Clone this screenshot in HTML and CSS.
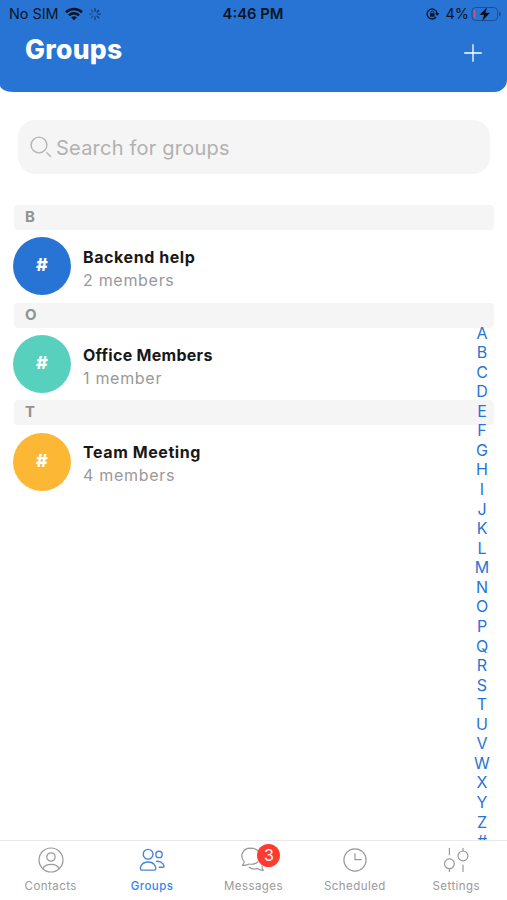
FILE: index.html
```html
<!DOCTYPE html>
<html lang="en">
<head>
    <meta charset="UTF-8">
    <meta name="viewport" content="width=device-width, initial-scale=1.0">
    <title>Groups</title>
    <link rel="stylesheet" href="styles.css">
</head>
<body>
    <div class="app">
        <header class="header">
            <div class="status-bar">
                <div class="status-left">
                    <span class="carrier">No SIM</span>
                    <svg class="wifi" width="18" height="14" viewBox="0 0 18 14" fill="none" stroke="#071426" stroke-width="2.6">
                        <path d="M1 5.2C5.5 0.9 12.5 0.9 17 5.2"/>
                        <path d="M4 8.4C6.9 5.7 11.1 5.7 14 8.4"/>
                        <path d="M9 13.2L6.2 10.4C7.8 9 10.2 9 11.8 10.4Z" fill="#071426" stroke="none"/>
                    </svg>
                    <svg class="spinner" width="12" height="12" viewBox="0 0 12 12" fill="none" stroke="#0b2750" stroke-width="1.1" stroke-linecap="round">
                        <path d="M6 .6v2.6M9.8 2.2L8 4"/>
                        <path d="M11.4 6H8.8M9.8 9.8L8 8M6 11.4V8.8" opacity=".85"/>
                        <path d="M2.2 9.8L4 8M.6 6h2.6M2.2 2.2L4 4" opacity=".5"/>
                    </svg>
                </div>
                <span class="clock">4:46 PM</span>
                <div class="status-right">
                    <svg width="14" height="12" viewBox="0 0 14 12" fill="none" stroke="#071426" stroke-width="1.3">
                        <path d="M10.1 9A5 5 0 1 1 11 5"/>
                        <path d="M9 5h4.4L11.2 8Z" fill="#071426" stroke="none"/>
                        <rect x="4" y="5.3" width="4.6" height="3.4" rx=".5" fill="#071426" stroke="none"/>
                        <path d="M4.9 5.4V4.3a1.4 1.4 0 0 1 2.8 0v1.1" stroke-width=".9"/>
                    </svg>
                    <span class="percent">4%</span>
                    <svg class="battery" width="31" height="16" viewBox="0 0 31 16">
                        <rect x="1" y="1.5" width="25.5" height="13" rx="3.6" fill="none" stroke="#1c4f91"/>
                        <path d="M28 5.5c2.6.8 2.6 4.2 0 5Z" fill="#1c4f91"/>
                        <rect x="2.7" y="4" width="1.6" height="8" rx=".8" fill="#c75b78"/>
                        <path d="M16.2 1L8.4 8.9h4.5L11 15.4l8-8.6h-4.5Z" fill="#050b14" stroke="#2874d4" stroke-width=".3"/>
                    </svg>
                </div>
            </div>
            <div class="title-bar">
                <h1 class="title">Groups</h1>
                <svg class="add" width="18" height="18" viewBox="0 0 18 18" stroke="#fff" stroke-width="1.3" stroke-linecap="round">
                    <path d="M9 .7v16.6M.7 9h16.6"/>
                </svg>
            </div>
        </header>

        <main class="content">
            <div class="search">
                <svg class="search-icon" width="22" height="22" viewBox="0 0 22 22">
                    <circle cx="9" cy="9" r="7.9"/>
                    <path d="M16.8 16.8l3.8 3.6"/>
                </svg>
                <span class="placeholder">Search for groups</span>
            </div>

            <div class="group-list">
                <div class="section-header">B</div>
                <div class="row">
                    <div class="avatar blue">#</div>
                    <div class="info">
                        <div class="name">Backend help</div>
                        <div class="members">2 members</div>
                    </div>
                </div>
                <div class="section-header">O</div>
                <div class="row">
                    <div class="avatar teal">#</div>
                    <div class="info">
                        <div class="name name-tight">Office Members</div>
                        <div class="members">1 member</div>
                    </div>
                </div>
                <div class="section-header">T</div>
                <div class="row">
                    <div class="avatar orange">#</div>
                    <div class="info">
                        <div class="name">Team Meeting</div>
                        <div class="members">4 members</div>
                    </div>
                </div>
            </div>

            <div class="alphabet">
                <span>A</span><span>B</span><span>C</span><span>D</span><span>E</span><span>F</span><span>G</span>
                <span>H</span><span>I</span><span>J</span><span>K</span><span>L</span><span>M</span><span>N</span>
                <span>O</span><span>P</span><span>Q</span><span>R</span><span>S</span><span>T</span><span>U</span>
                <span>V</span><span>W</span><span>X</span><span>Y</span><span>Z</span><span>#</span>
            </div>
        </main>

        <nav class="tabs">
            <div class="tab">
                <svg width="28" height="26" viewBox="0 0 28 26">
                    <circle cx="14" cy="13" r="12"/>
                    <circle cx="14" cy="10" r="4.2"/>
                    <path d="M6 21.6C8.2 16 19.8 16 22 21.6"/>
                </svg>
                <span>Contacts</span>
            </div>
            <div class="tab active">
                <svg width="28" height="26" viewBox="0 0 28 26">
                    <circle cx="10.1" cy="7.3" r="4.9"/>
                    <circle cx="21" cy="7.4" r="3.2"/>
                    <path d="M3.8 23.1C.8 23.1 2.5 15 10.1 15s9.3 8.1 6.3 8.1Z"/>
                    <path d="M18.7 14.3c5.5-.6 8.9 5.5 6.5 6h-4"/>
                </svg>
                <span>Groups</span>
            </div>
            <div class="tab">
                <div class="tab-icon">
                    <svg width="28" height="26" viewBox="0 0 28 26">
                        <path d="M19 14.8c-2.2 2-5.4 2.9-9 2.2-2 1.1-4 1.7-6.5 1.4 1.2-1.4 1.7-2.5 1.6-4.1C.2 8.7 3.8 1.3 11.5 1.1c3 0 5.4.8 7.2 2.4"/>
                        <path d="M10.2 20.2c2.2 1.8 5.2 2.2 8.2 1.4 1.8 1.2 3.6 1.8 5.8 1.8-.9-1.6-1.2-2.7-1.1-4.3"/>
                    </svg>
                    <span class="badge">3</span>
                </div>
                <span>Messages</span>
            </div>
            <div class="tab">
                <svg width="28" height="26" viewBox="0 0 28 26">
                    <circle cx="14" cy="13" r="11.1"/>
                    <path d="M14 6.7v6h6.2"/>
                </svg>
                <span>Scheduled</span>
            </div>
            <div class="tab">
                <svg width="28" height="26" viewBox="0 0 28 26">
                    <circle cx="7.4" cy="16.8" r="4.9"/>
                    <circle cx="21" cy="8.9" r="4.9"/>
                    <path d="M7.4 1.3v6.4M7.4 21.7v2.8M21 1.3V4M21 18v6.4"/>
                </svg>
                <span>Settings</span>
            </div>
        </nav>
    </div>
</body>
</html>
```
FILE: styles.css
```css
* {
    margin: 0;
    padding: 0;
    box-sizing: border-box;
}

body {
    background-color: #fff;
    font-family: Inter, "Noto Sans", sans-serif;
}

svg {
    display: block;
    flex-shrink: 0;
}

.app {
    display: flex;
    flex-direction: column;
    height: 900px;
    width: 507px;
    overflow: hidden;
}

/* Header */
.header {
    height: 92px;
    background-color: #2874d4;
    border-radius: 0 0 13px 13px / 0 0 12px 7px;
}

.status-bar {
    display: grid;
    grid-template-columns: 1fr auto 1fr;
    align-items: center;
    height: 27px;
    padding: 0 5px 0 9px;
    color: #071426;
    font-size: 14.4px;
}

.status-left,
.status-right {
    display: flex;
    align-items: center;
}

.status-right {
    justify-content: flex-end;
}

.wifi {
    margin-left: 6px;
}

.spinner {
    margin-left: 6px;
}

.clock {
    margin-right: 5px;
    font-weight: 600;
    font-size: 14.8px;
}

.percent {
    margin-left: 6px;
}

.battery {
    margin-left: 2px;
}

.title-bar {
    display: flex;
    justify-content: space-between;
    align-items: center;
    height: 44px;
    padding: 0 25px 0 25px;
}

.title {
    color: #fff;
    font-size: 26.5px;
    font-weight: 800;
    letter-spacing: 0.3px;
    line-height: 44px;
}

.add {
    margin-top: 8px;
}

/* Search and list */
.content {
    position: relative;
    flex: 1;
    min-height: 0;
    overflow: hidden;
    padding: 28px 13px 0 14px;
}

.search {
    display: flex;
    align-items: center;
    gap: 4px;
    height: 54px;
    margin: 0 4px 31px 4px;
    padding-left: 12px;
    border-radius: 17px;
    background-color: #f5f5f5;
}

.search-icon {
    fill: none;
    stroke: #b4b4b4;
    stroke-width: 1.4;
    stroke-linecap: round;
}

.placeholder {
    padding-top: 2px;
    color: #b1b1b1;
    font-size: 20px;
    letter-spacing: 0.22px;
}

.section-header {
    height: 25px;
    padding-left: 11px;
    border-radius: 4px;
    background-color: #f5f5f5;
    color: #929292;
    font-size: 15px;
    font-weight: 700;
    line-height: 24px;
}

.row {
    display: flex;
    align-items: center;
    height: 72.7px;
    margin-left: -1px;
}

.avatar {
    width: 58px;
    height: 58px;
    border-radius: 50%;
    color: #fff;
    font-size: 18px;
    font-weight: 800;
    line-height: 55px;
    text-align: center;
}

.blue {
    background-color: #2874d4;
}

.teal {
    background-color: #58d0be;
}

.orange {
    background-color: #fcb835;
}

.info {
    margin-left: 12px;
    padding-top: 5px;
}

.name {
    color: #181818;
    font-size: 16px;
    font-weight: 700;
    letter-spacing: 0.58px;
    line-height: 23px;
}

.name-tight {
    letter-spacing: 0.28px;
}

.members {
    color: #999;
    font-size: 16px;
    letter-spacing: 0.7px;
    line-height: 23px;
}

/* Letter index over the list, runs on under the tabs */
.alphabet {
    position: absolute;
    top: 231.5px;
    right: 10px;
    display: flex;
    flex-direction: column;
    width: 30px;
    color: #2874d4;
    font-size: 16px;
    line-height: 19.56px;
    text-align: center;
}

/* Bottom tabs */
.tabs {
    display: grid;
    grid-template-columns: repeat(5, 1fr);
    height: 60px;
    border-top: 1px solid #e8e8e8;
    background-color: #fff;
}

.tab {
    display: flex;
    flex-direction: column;
    align-items: center;
    gap: 5px;
    padding-top: 6px;
    color: #999;
    font-size: 11.5px;
    letter-spacing: 0.45px;
    line-height: 16px;
}

.tab svg {
    fill: none;
    stroke: #999;
    stroke-width: 1.2;
    stroke-linecap: round;
    stroke-linejoin: round;
}

.tab.active {
    color: #3485f0;
    font-weight: 500;
}

.tab.active svg {
    stroke: #4a86d8;
    stroke-width: 1.4;
}

.tab-icon {
    position: relative;
}

.badge {
    position: absolute;
    top: -3px;
    left: 18px;
    width: 23px;
    height: 23px;
    border-radius: 50%;
    background-color: #fd3b31;
    color: #fff;
    font-size: 16px;
    letter-spacing: 0;
    line-height: 23px;
    text-align: center;
}
```
